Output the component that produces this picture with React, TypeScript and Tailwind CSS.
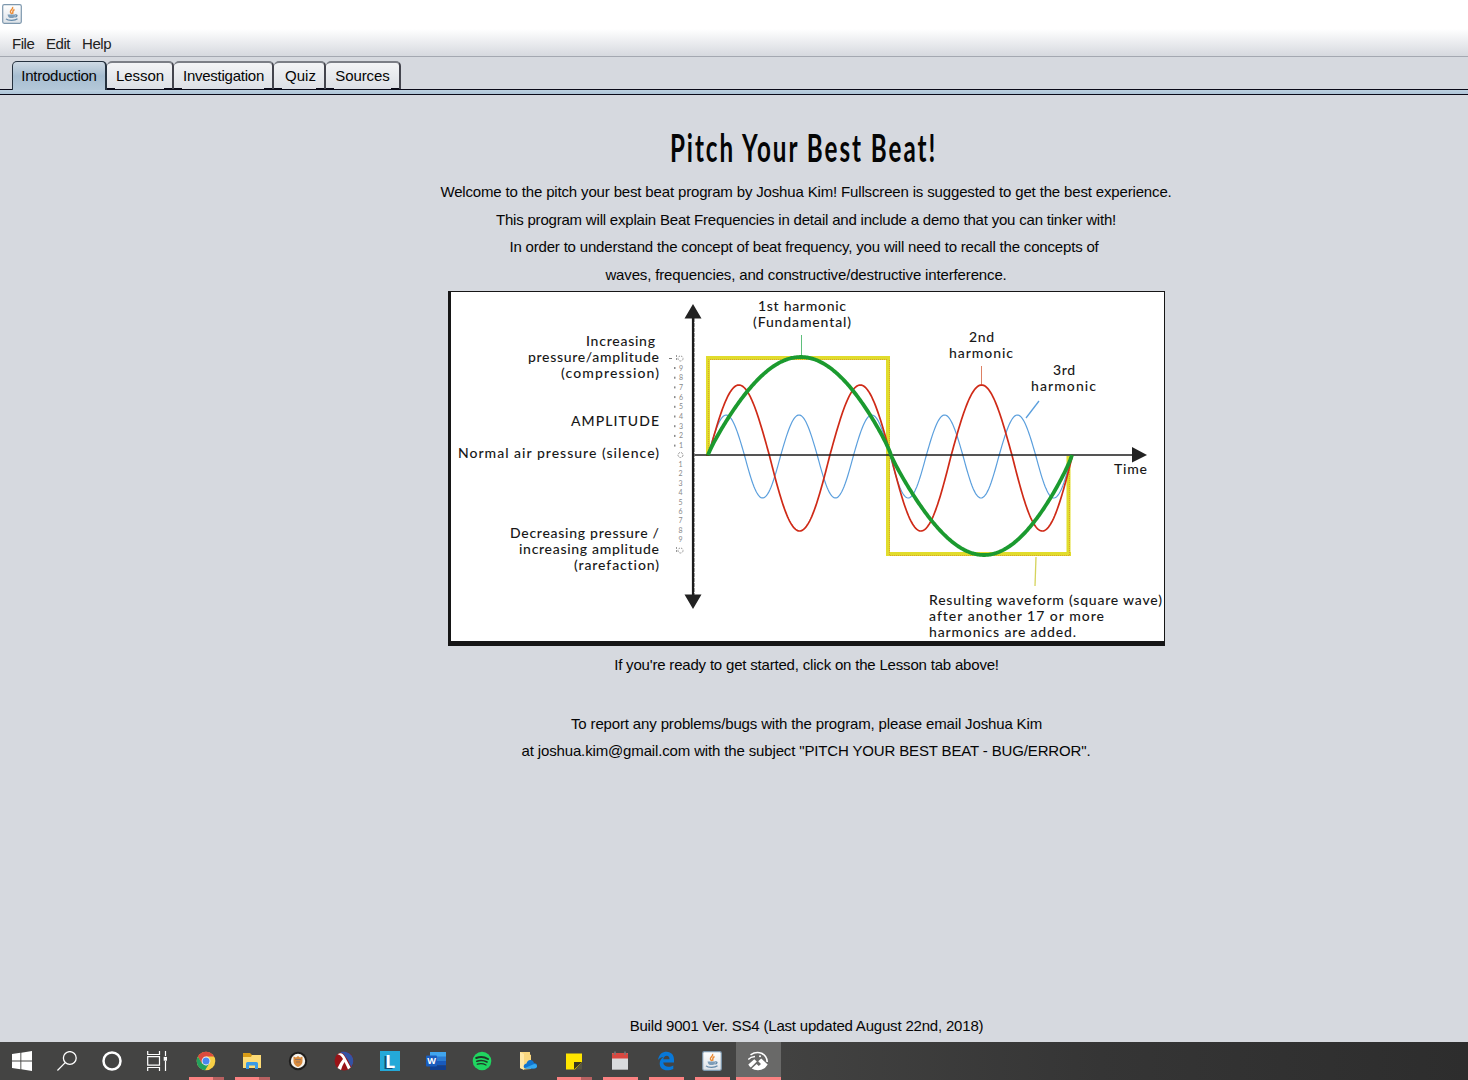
import React from "react";

type Shape = { up: number; down: number };

const START = 708;
const END = 1072;
const AXIS = 455;

function wave(cycles: number, { up, down }: Shape) {
  const pts: string[] = [];
  for (let x = START; x <= END; x += 1) {
    const s = Math.sin(((x - START) / (END - START)) * Math.PI * 2 * cycles);
    pts.push(`${x},${(AXIS - s * (s > 0 ? up : down)).toFixed(2)}`);
  }
  return pts.join(" ");
}

// Half a period of the fundamental, slightly fuller than a plain sine and leaning right.
function arch(from: number, to: number, height: number, lean: number) {
  const pts: string[] = [];
  for (let x = from; x <= to; x += 1) {
    const t = Math.pow((x - from) / (to - from), lean);
    const s = Math.pow(Math.max(0, Math.sin(Math.PI * t)), 0.87);
    pts.push(`${x},${(AXIS - s * height).toFixed(2)}`);
  }
  return pts.join(" ");
}

const chartLabels: { x: number; y: number; w: number; t: string }[] = [
  { x: 758, y: 311, w: 88, t: "1st harmonic" },
  { x: 753, y: 327, w: 98, t: "(Fundamental)" },
  { x: 586, y: 346, w: 69, t: "Increasing" },
  { x: 528, y: 362, w: 131, t: "pressure/amplitude" },
  { x: 561, y: 378, w: 98, t: "(compression)" },
  { x: 571, y: 426, w: 88, t: "AMPLITUDE" },
  { x: 458, y: 458, w: 201, t: "Normal air pressure (silence)" },
  { x: 510, y: 538, w: 149, t: "Decreasing pressure /" },
  { x: 519, y: 554, w: 140, t: "increasing amplitude" },
  { x: 574, y: 570, w: 85, t: "(rarefaction)" },
  { x: 969, y: 342, w: 25, t: "2nd" },
  { x: 949, y: 358, w: 64, t: "harmonic" },
  { x: 1053, y: 375, w: 22, t: "3rd" },
  { x: 1031, y: 391, w: 65, t: "harmonic" },
  { x: 1114, y: 474, w: 33, t: "Time" },
  { x: 929, y: 605, w: 233, t: "Resulting waveform (square wave)" },
  { x: 929, y: 621, w: 175, t: "after another 17 or more" },
  { x: 929, y: 637, w: 147, t: "harmonics are added." },
];

const upTicks = ["9", "8", "7", "6", "5", "4", "3", "2", "1"];
const downTicks = ["1", "2", "3", "4", "5", "6", "7", "8", "9"];

function HarmonicsChart() {
  return (
    <svg viewBox="448 291 717 355" className="block h-[355px] w-[717px] shrink-0" fill="none">
      <rect x="448" y="291" width="717" height="355" fill="#161616" />
      <rect x="451" y="292" width="713" height="349" fill="#fff" />
      <g stroke="#e1dc2c" strokeWidth="4">
        <path d="M708 456V358H890" />
        <path d="M888 356V554H1071" />
        <path d="M1068.5 456V556" />
      </g>
      <g stroke="#d9a32c" strokeWidth="1" strokeDasharray="1 1">
        <path d="M708.5 456V359.5H887M889.500 360V555.500H1070M1069.500 460V555" />
      </g>
      <path d="M1036 557L1035 586" stroke="#d5d35c" strokeWidth="1.300" />
      <path d="M801.500 335V356" stroke="#5fbf7c" />
      <path d="M981.500 366V385" stroke="#dd8063" />
      <path d="M1039 401L1026 418" stroke="#5b9fdd" strokeWidth="1.300" />
      <polyline points={wave(5, { up: 40, down: 43 })} stroke="#5b9fdd" strokeWidth="1.200" />
      <polyline points={wave(3, { up: 70, down: 76 })} transform="translate(.6 0)" stroke="#cf2a17" strokeWidth="1.700" />
      <path d="M694 455H1133" stroke="#1c1c1c" strokeWidth="1.600" />
      <polyline points={arch(708, 891, 98, 1.02)} stroke="#1b9a2f" strokeWidth="3.800" />
      <polyline points={arch(891, 1072, -100, 1.04)} stroke="#1b9a2f" strokeWidth="3.800" />
      <path d="M693 316V597" stroke="#1c1c1c" strokeWidth="2.200" />
      <path d="M694.500 318V596" stroke="#777" strokeDasharray="4 1" strokeWidth=".7" />
      <path d="M693 304L701.500 318.500H684.500ZM693 609L701.500 594.500H684.500ZM1147 455L1132 447V462.500Z" fill="#222" />
      <g className="font-['Lato'] text-[7px]" fill="#888">
        {upTicks.map((t, i) => (
          <g key={t}>
            <rect x="674" y={367 + i * 9.7} width="1.500" height="2" />
            <text x="679" y={370.5 + i * 9.7}>{t}</text>
          </g>
        ))}
        {downTicks.map((t, i) => (
          <text key={t} x="678.500" y={467 + i * 9.4}>{t}</text>
        ))}
        <path d="M669 358.500H672" stroke="#777" />
      </g>
      <g stroke="#999" strokeDasharray="2 1">
        <circle cx="680.500" cy="358.500" r="2.500" />
        <circle cx="680.500" cy="455" r="2.500" />
        <circle cx="680.500" cy="550.500" r="2.500" />
        <path d="M676.500 355V361M676.500 547V553" />
      </g>
      <g className="font-['Lato'] text-[14px] font-medium [font-variant-ligatures:none]" fill="#181818">
        {chartLabels.map((l) => (
          <text key={`${l.x}-${l.y}`} x={l.x} y={l.y} textLength={l.w}>{l.t}</text>
        ))}
      </g>
    </svg>
  );
}

function JavaIcon({ className }: { className: string }) {
  return (
    <svg viewBox="0 0 20 20" className={className} fill="none">
      <defs>
        <linearGradient id="javaTile" x2="0" y2="1">
          <stop stopColor="#fff" />
          <stop offset="1" stopColor="#dde2e8" />
        </linearGradient>
      </defs>
      <rect x=".7" y=".7" width="18.600" height="18.600" rx="1.500" fill="url(#javaTile)" stroke="#7d97ad" strokeWidth="1.200" />
      <path d="M10.500 3C12 5 7 6.500 8.500 8.500L10 10M12.500 5.500C9.500 7 11.500 8 10.500 9.800" stroke="#ec8b34" strokeWidth="1.500" />
      <path d="M5.500 10.500H13C13 14 11.500 14 9.500 14S6 13.500 5.500 10.500Z" fill="#7e9db8" />
      <path d="M13 11C16 10.500 15.500 13 12.500 13M4 14.800C6 16.800 13 16.800 15.500 14.800" stroke="#6288a8" strokeWidth="1.200" />
    </svg>
  );
}

const menus = [
  { t: "File", c: "w-[34px]" },
  { t: "Edit", c: "w-[36px]" },
  { t: "Help", c: "w-[36px]" },
];

const tabs = [
  { t: "Lesson", c: "w-[67px]", s: "pl-[1px] tracking-[-0.1px]" },
  { t: "Investigation", c: "w-[100px]", s: "pl-[1px] tracking-[-0.25px]" },
  { t: "Quiz", c: "w-[52px]", s: "pl-[3px]" },
  { t: "Sources", c: "w-[75px]", s: "tracking-[-0.1px]" },
];

function TabBar() {
  return (
    <div className="h-[38px]">
      <div className="flex h-[33px] items-end border-b border-[#0a0a18] pl-3">
        <div className="z-10 -mb-px flex h-[29px] w-[95px] shrink-0 justify-center rounded-t-[5px] border border-r-2 border-b-0 border-[#26323f] bg-linear-to-b from-[#cfdae4] via-[#a6bdd0] to-[#b4c8d9] pt-[6px]">
          <span className="whitespace-nowrap tracking-[-0.25px]">Introduction</span>
        </div>
        {tabs.map((t) => (
          <div key={t.t} className={`relative flex h-7 shrink-0 justify-center rounded-t-[5px] border-t-2 border-r-2 border-t-[#7b7e86] border-r-[#44454e] bg-linear-to-b from-[#f3f4f6] to-[#dcdfe5] pt-[5px] ${t.c}`}>
            <span className={`whitespace-nowrap ${t.s}`}>{t.t}</span>
            <span className="absolute bottom-0 left-0 h-px w-2 bg-[#0a0a18]" />
            <span className="absolute right-0 bottom-0 h-px w-2 bg-[#0a0a18]" />
          </div>
        ))}
      </div>
      <div className="h-[5px] border-b border-[#0a0a18] bg-linear-to-b from-[#bdd1e1] to-[#adc4d7]" />
    </div>
  );
}

function Line({ children, className }: { children: React.ReactNode; className: string }) {
  return <p className={`flex shrink-0 items-center justify-center whitespace-nowrap ${className}`}>{children}</p>;
}

const svgBox = "block h-5 w-5";

const systemIcons = [
  <svg viewBox="0 0 20 20" className={svgBox} fill="#fff">
    <path d="M0 3L8.400 1.800V9.500H0ZM9.300 1.700L20 0V9.500H9.300ZM0 10.500H8.400V18.200L0 17ZM9.300 10.500H20V20L9.300 18.300Z" />
  </svg>,
  <svg viewBox="0 0 20 20" className={svgBox} fill="none" stroke="#fff" strokeWidth="1.300">
    <circle cx="12.800" cy="7" r="6.400" />
    <path d="M8.200 11.600L.4 19.500" />
  </svg>,
  <svg viewBox="0 0 20 20" className={svgBox} fill="none" stroke="#fff" strokeWidth="2.500">
    <circle cx="10" cy="10" r="8.500" />
  </svg>,
  <svg viewBox="0 0 20 20" className={svgBox} fill="none" stroke="#fff" strokeWidth="1.200">
    <path d="M.7 0V3.500H12.500V0M.7 20V16.500H12.500V20M.7 5.700H12.500V14.200H.7ZM18.500 0V5M18.500 10V20" />
    <rect x="17.300" y="6.500" width="2.600" height="2.600" fill="#fff" />
  </svg>,
];

type TaskApp = { key: string; icon: React.ReactNode; bar: "none" | "full" | "split" | "active" };

const apps: TaskApp[] = [
  {
    key: "chrome",
    bar: "split",
    icon: (
      <svg viewBox="0 0 20 20" className={svgBox}>
        <circle cx="10" cy="10" r="9.300" fill="#f8cf45" />
        <path d="M10 10L5.800 12.400L1.900 5.400A9.300 9.300 0 0 1 18.100 5.400H10Z" fill="#dc4a3d" />
        <path d="M1.900 5.400L6 12.500L10 14.500L9 19.250A9.300 9.300 0 0 1 1.900 5.400Z" fill="#23a15d" />
        <path d="M9 19.250L13.500 12L10 14.500L6 12.500Z" fill="#23a15d" />
        <circle cx="10" cy="10" r="4.400" fill="#f3f3f3" />
        <circle cx="10" cy="10" r="3.500" fill="#4a87ee" />
      </svg>
    ),
  },
  {
    key: "explorer",
    bar: "split",
    icon: (
      <svg viewBox="0 0 20 20" className={svgBox}>
        <path d="M1 2H8L10 4H19V10H1Z" fill="#d99c16" />
        <path d="M1 6H9L10 4H19V17H1Z" fill="#fddb75" />
        <path d="M4 18V12.500Q4 11 5.500 11H14.500Q16 11 16 12.500V18H13V14.500H7V18Z" fill="#3a9be6" />
      </svg>
    ),
  },
  {
    key: "crest",
    bar: "none",
    icon: (
      <svg viewBox="0 0 20 20" className={svgBox}>
        <circle cx="10" cy="10" r="9.200" fill="#1e1d1c" />
        <circle cx="10" cy="10" r="7.200" fill="#f5f2ec" />
        <path d="M5.500 5.500L8 6.500L10 5L12 6.500L14.500 5.500V10Q14.500 14 10 16Q5.500 14 5.500 10Z" fill="#d98a3c" />
        <path d="M7 8.500H13M8 11H12" stroke="#8d7260" />
      </svg>
    ),
  },
  {
    key: "racket",
    bar: "none",
    icon: (
      <svg viewBox="0 0 20 20" className={svgBox}>
        <circle cx="10" cy="10" r="9.400" fill="#9a1317" />
        <path d="M6 1.500A9.400 9.400 0 0 1 17.200 16Q14 8 9.500 3Z" fill="#3353a4" />
        <path d="M3.500 3.300Q8 0 11 6Q13.500 11 16.700 16.500L14 18.600Q12.500 15 10.500 11Q8 15 7 18.900L3.500 16.900Q6 11.500 9 8Q7 4 3.500 3.300Z" fill="#fff" />
      </svg>
    ),
  },
  {
    key: "lightshot",
    bar: "none",
    icon: (
      <span className="flex h-5 w-5 items-center justify-center bg-[#24a9d8] font-['Open_Sans'] text-[18px] leading-none font-bold text-white [text-shadow:-2px_1px_0_#124b75]">L</span>
    ),
  },
  {
    key: "word",
    bar: "none",
    icon: (
      <svg viewBox="0 0 20 20" className={svgBox}>
        <path d="M4 1H20V6H4Z" fill="#41a5ee" />
        <path d="M4 5.500H20V10H4Z" fill="#2b7cd3" />
        <path d="M4 10H20V14.500H4Z" fill="#185abd" />
        <path d="M4 14.500H20V19H4Z" fill="#103f91" />
        <rect y="4.500" width="11" height="11" rx="1" fill="#1a5dbe" />
        <text x="5.500" y="13.200" textAnchor="middle" fill="#fff" className="font-['Open_Sans'] text-[9px] font-bold">W</text>
      </svg>
    ),
  },
  {
    key: "spotify",
    bar: "none",
    icon: (
      <svg viewBox="0 0 20 20" className={svgBox} fill="none" stroke="#1f3727" strokeLinecap="round">
        <circle cx="10" cy="10" r="9.300" fill="#20d660" stroke="none" />
        <path d="M4.200 7Q10.500 4.800 16 8" strokeWidth="2" />
        <path d="M4.800 10.200Q10.200 8.400 15 11" strokeWidth="1.600" />
        <path d="M5.300 13.200Q10 11.800 14 14" strokeWidth="1.300" />
      </svg>
    ),
  },
  {
    key: "onedrive",
    bar: "none",
    icon: (
      <svg viewBox="0 0 20 20" className={svgBox}>
        <path d="M2 1H12V3.500L13 4V18L6 18.500L2 17Z" fill="#f9d77f" />
        <path d="M2 1L6 3V19L2 17Z" fill="#ffe8a6" />
        <path d="M8 17.500Q4.800 17.300 6 14Q7 12.500 8.500 12.500Q9.500 8.500 13 9Q15.500 9.500 16 12Q19 12 19 15Q19 17.500 16.500 17.500Z" fill="#1275cf" />
        <path d="M7 17L15.500 13.200Q19 12.500 19 15.200Q18.500 17.500 16 17.500H8Z" fill="#33a8f1" />
      </svg>
    ),
  },
  {
    key: "notes",
    bar: "split",
    icon: (
      <svg viewBox="0 0 20 20" className={svgBox}>
        <path d="M2 2.500H18V11L11 18.500H2Z" fill="#ffe500" />
        <path d="M10 18.500V11H18Z" fill="#383620" />
        <path d="M11.500 18.500L18 12V18.500Z" fill="#575542" />
      </svg>
    ),
  },
  {
    key: "calendar",
    bar: "full",
    icon: (
      <svg viewBox="0 0 20 20" className={svgBox}>
        <rect x="2" y="2" width="16" height="17" rx="1" fill="#d9dbdc" />
        <path d="M2 3Q2 2 3 2H17Q18 2 18 3V7.500H2Z" fill="#d94840" />
        <path d="M5 .5V4M15 .5V4" stroke="#777" strokeWidth="1.500" />
        <path d="M2 18.500H18" stroke="#aaa" />
      </svg>
    ),
  },
  {
    key: "edge",
    bar: "full",
    icon: (
      <svg viewBox="0 0 20 20" className={svgBox}>
        <path d="M2 9C3 3 6.500.8 10.500.8C15.500.8 18 4.500 18 8.500V11.500H7.200C7.500 14.500 10 15.800 12.500 15.800C14.500 15.800 16 15.200 17.300 14.500V18C15.500 18.900 13.500 19.300 11.300 19.300C6.500 19.300 3.700 16.500 3.700 12.500C3.700 9.500 5.200 7.200 7.500 5.900C5 6 3 7.500 2 9ZM7.300 8.300H13.500C13.500 6 12.500 4.800 10.800 4.800C9 4.800 7.600 6.200 7.300 8.300Z" fill="#0878d8" />
      </svg>
    ),
  },
  { key: "java", bar: "full", icon: <JavaIcon className={svgBox} /> },
  {
    key: "photos",
    bar: "active",
    icon: (
      <svg viewBox="0 0 20 20" className={svgBox} fill="none" stroke="#fff">
        <path d="M2.500 3.800Q8 .2 13.500 2.200Q19 4.800 19.200 11" strokeWidth="1.600" />
        <path d="M.3 8.500Q2.500 5.800 7 5.500" strokeWidth="1.300" />
        <path d="M.3 13.500L6.300 8.300L8.800 10.500L2.800 16.500Q1 15 .3 13.500Z" fill="#fff" stroke="none" />
        <path d="M10.200 10.300L13.200 7.500L19.700 13.500Q16.500 19.200 10 19.200Q6 19.200 3.700 17.400L8.600 13L10.800 15L13 13Z" fill="#fff" stroke="none" />
        <circle cx="12" cy="5.300" r="1" fill="#fff" stroke="none" />
      </svg>
    ),
  },
];

function Taskbar() {
  return (
    <footer className="flex h-[38px] shrink-0 bg-linear-to-r from-[#444443] from-50% via-[#353535] via-75% to-[#2d2d2d]">
      {systemIcons.map((icon, i) => (
        <div key={i} className="flex w-[45px] items-center justify-center pr-px">{icon}</div>
      ))}
      <div className="flex pl-[3px]">
        {apps.map((a) => (
          <div key={a.key} className={`relative flex items-center justify-center ${a.bar === "active" ? "ml-px w-[45px] bg-[#696968] pr-px" : "w-[46px]"}`}>
            {a.icon}
            {a.bar === "full" && <span className="absolute bottom-0 left-1.5 h-[3px] w-[35px] bg-[#fb8282]" />}
            {a.bar === "active" && <span className="absolute inset-x-0 bottom-0 h-[3px] bg-[#fb8282]" />}
            {a.bar === "split" && (
              <span className="absolute bottom-0 left-1.5 flex h-[3px] w-[35px] bg-[#b76161]">
                <span className="w-6 bg-[#fb8282]" />
              </span>
            )}
          </div>
        ))}
      </div>
    </footer>
  );
}

export default function App() {
  return (
    <div className="flex h-[1080px] w-[1468px] flex-col overflow-hidden bg-[#d6d9df] font-['Liberation_Sans',sans-serif] text-[15px] leading-none text-[#050505]">
      <header className="h-[29px] shrink-0 bg-white pt-1 pl-0.5">
        <JavaIcon className="block h-5 w-5" />
      </header>
      <nav className="flex h-7 shrink-0 items-center border-b border-[#a4a8b1] bg-linear-to-b from-white to-[#d6d9df] pt-0.5 pl-3">
        {menus.map((m) => (
          <span key={m.t} className={`tracking-[-0.45px] text-[#222] ${m.c}`}>{m.t}</span>
        ))}
      </nav>
      <TabBar />
      <main className="flex w-[1612px] grow flex-col items-center">
        <h1 className="mr-[4px] flex h-[82px] shrink-0 items-center justify-center pt-[23px]">
          <span className="scale-x-[0.62] font-['Lato'] text-[39px] font-bold tracking-[3.2px] whitespace-nowrap">Pitch Your Best Beat!</span>
        </h1>
        <Line className="h-[28px] tracking-[-0.157px]">Welcome to the pitch your best beat program by Joshua Kim! Fullscreen is suggested to get the best experience.</Line>
        <Line className="h-[28px] tracking-[-0.2px]">This program will explain Beat Frequencies in detail and include a demo that you can tinker with!</Line>
        <Line className="mr-1 h-[26px] tracking-[-0.18px]">In order to understand the concept of beat frequency, you will need to recall the concepts of</Line>
        <Line className="h-[32px] pb-[1px] tracking-[-0.145px]">waves, frequencies, and constructive/destructive interference.</Line>
        <HarmonicsChart />
        <Line className="h-[36px] pl-px tracking-[-0.19px]">If you're ready to get started, click on the Lesson tab above!</Line>
        <Line className="mt-[28px] h-[27px] pl-px tracking-[-0.145px]">To report any problems/bugs with the program, please email Joshua Kim</Line>
        <Line className="h-[26px] tracking-[-0.145px]">at joshua.kim@gmail.com with the subject "PITCH YOUR BEST BEAT - BUG/ERROR".</Line>
        <Line className="mt-auto h-[34px] pl-px tracking-[-0.19px]">Build 9001 Ver. SS4 (Last updated August 22nd, 2018)</Line>
      </main>
      <Taskbar />
    </div>
  );
}
